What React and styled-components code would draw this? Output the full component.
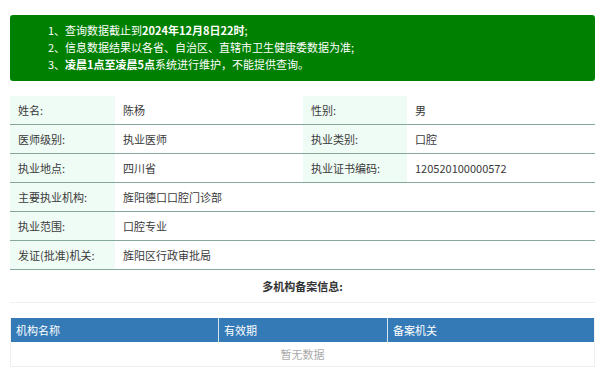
import React from 'react'
import styled, { createGlobalStyle } from 'styled-components'

const GlobalStyle = createGlobalStyle`
  html, body {
    margin: 0;
    padding: 0;
    background: #fff;
  }
  body {
    font-family: "Noto Sans CJK SC", "Noto Sans", sans-serif;
    font-size: 11px;
    color: #333;
  }
`

const Page = styled.div`
  padding: 15px 5px 0 10px;
`

const Notice = styled.div`
  background: #008000;
  border-radius: 3px;
  color: #fff;
  padding: 7px 10px 8px 38px;
  line-height: 17px;
  font-size: 11px;
  b {
    font-weight: 700;
  }
`

const InfoGrid = styled.div`
  display: grid;
  grid-template-columns: 105px 188px 104px 188px;
  margin-top: 15px;
`

const Cell = styled.div`
  height: 29px;
  display: flex;
  align-items: center;
  box-sizing: border-box;
  padding-left: 8px;
  background: ${p => (p.$label ? '#effcf5' : '#fff')};
  border-bottom: 1.5px solid #86a89c;
  grid-column: ${p => (p.$span ? `span ${p.$span}` : 'auto')};
  color: #3a3a3a;
`

const Title = styled.div`
  height: 32px;
  display: flex;
  align-items: center;
  justify-content: center;
  font-weight: 700;
  color: #333;
  border-bottom: 1px solid #f0f0f0;
`

const Table = styled.div`
  margin-top: 15px;
  border: 1px solid #eee;
  border-top: none;
`

const HeadRow = styled.div`
  display: grid;
  grid-template-columns: 207px 169px 1fr;
  background: #337ab7;
`

const Th = styled.div`
  color: #fff;
  height: 24px;
  display: flex;
  align-items: center;
  padding: 0 5px;
  border-left: ${p => (p.$first ? 'none' : '1px solid #d6e4f0')};
`

const Empty = styled.div`
  text-align: center;
  color: #aaa;
  height: 24px;
  line-height: 24px;
`

const pairs = [
  ['姓名:', '陈杨', '性别:', '男'],
  ['医师级别:', '执业医师', '执业类别:', '口腔'],
  ['执业地点:', '四川省', '执业证书编码:', '120520100000572'],
]

const singles = [
  ['主要执业机构:', '旌阳德口口腔门诊部'],
  ['执业范围:', '口腔专业'],
  ['发证(批准)机关:', '旌阳区行政审批局'],
]

export default function App() {
  return (
    <Page>
      <GlobalStyle />
      <Notice>
        <div>1、查询数据截止到<b>2024年12月8日22时</b>;</div>
        <div>2、信息数据结果以各省、自治区、直辖市卫生健康委数据为准;</div>
        <div>3、<b>凌晨1点至凌晨5点</b>系统进行维护，不能提供查询。</div>
      </Notice>

      <InfoGrid>
        {pairs.map(r => (
          <React.Fragment key={r[0]}>
            <Cell $label>{r[0]}</Cell>
            <Cell>{r[1]}</Cell>
            <Cell $label>{r[2]}</Cell>
            <Cell>{r[3]}</Cell>
          </React.Fragment>
        ))}
        {singles.map(r => (
          <React.Fragment key={r[0]}>
            <Cell $label>{r[0]}</Cell>
            <Cell $span={3}>{r[1]}</Cell>
          </React.Fragment>
        ))}
      </InfoGrid>

      <Title>多机构备案信息:</Title>

      <Table>
        <HeadRow>
          <Th $first>机构名称</Th>
          <Th>有效期</Th>
          <Th>备案机关</Th>
        </HeadRow>
        <Empty>暂无数据</Empty>
      </Table>
    </Page>
  )
}
